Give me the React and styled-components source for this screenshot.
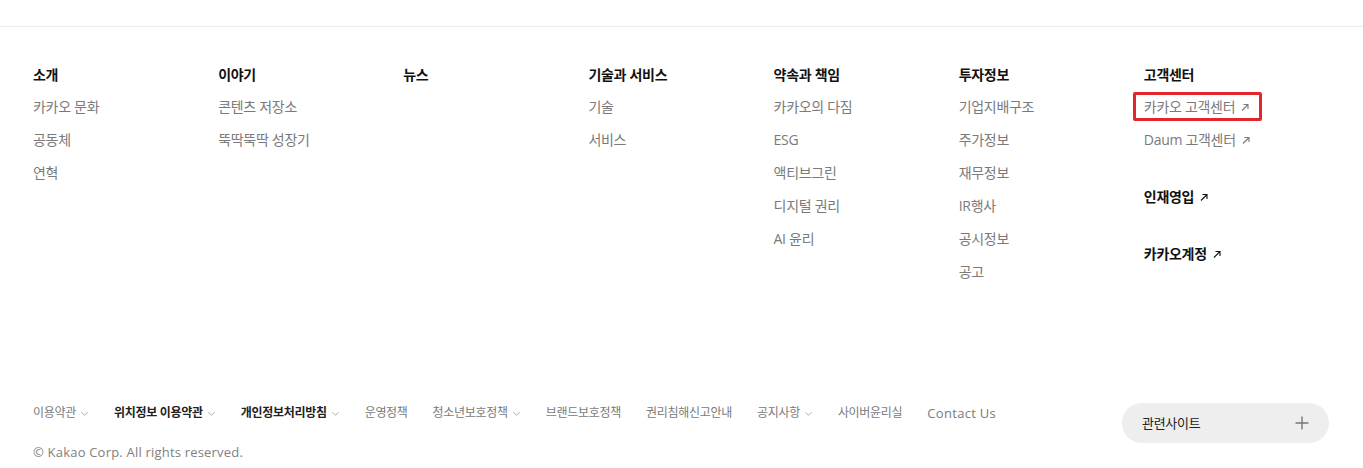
import styled, { createGlobalStyle } from 'styled-components';

const GlobalStyle = createGlobalStyle`
  * { box-sizing: border-box; }
  body {
    margin: 0;
    background: #fff;
    font-family: "Open Sans", "Noto Sans CJK KR", sans-serif;
    color: #222;
  }
  a { text-decoration: none; color: inherit; }
  ul { list-style: none; margin: 0; padding: 0; }
`;

const columns = [
  { title: '소개', items: ['카카오 문화', '공동체', '연혁'] },
  { title: '이야기', items: ['콘텐츠 저장소', '뚝딱뚝딱 성장기'] },
  { title: '뉴스', items: [] },
  { title: '기술과 서비스', items: ['기술', '서비스'] },
  { title: '약속과 책임', items: ['카카오의 다짐', 'ESG', '액티브그린', '디지털 권리', 'AI 윤리'] },
  { title: '투자정보', items: ['기업지배구조', '주가정보', '재무정보', 'IR행사', '공시정보', '공고'] },
];

const policies = [
  { label: '이용약관', more: true },
  { label: '위치정보 이용약관', more: true, strong: true },
  { label: '개인정보처리방침', more: true, strong: true },
  { label: '운영정책' },
  { label: '청소년보호정책', more: true },
  { label: '브랜드보호정책' },
  { label: '권리침해신고안내' },
  { label: '공지사항', more: true },
  { label: '사이버윤리실' },
  { label: 'Contact Us', latin: true },
];

function Arrow() {
  return (
    <ArrowIcon viewBox="0 0 10 10" width="10" height="10">
      <path d="M2 8.5L8 2.5M3.5 2.5H8V7" fill="none" stroke="currentColor" strokeWidth="1.1" />
    </ArrowIcon>
  );
}

function Chevron() {
  return (
    <ChevronIcon viewBox="0 0 10 10" width="9" height="9">
      <path d="M1.5 3.5L5 7L8.5 3.5" fill="none" stroke="currentColor" strokeWidth="0.9" />
    </ChevronIcon>
  );
}

export default function App() {
  return (
    <>
      <GlobalStyle />
      <Footer>
        <Inner>
          <Columns>
            {columns.map((col) => (
              <Column key={col.title}>
                <Title>{col.title}</Title>
                <List>
                  {col.items.map((item) => (
                    <li key={item}>
                      <Item href="#">{item}</Item>
                    </li>
                  ))}
                </List>
              </Column>
            ))}
            <Column>
              <Title>고객센터</Title>
              <List>
                <li>
                  <Item href="#" $marked>
                    카카오 고객센터 <Arrow />
                  </Item>
                </li>
                <li>
                  <Item href="#">
                    Daum 고객센터 <Arrow />
                  </Item>
                </li>
              </List>
              <Group>
                <Title as="a" href="#">
                  인재영입 <Arrow />
                </Title>
              </Group>
              <Group>
                <Title as="a" href="#">
                  카카오계정 <Arrow />
                </Title>
              </Group>
            </Column>
          </Columns>

          <Bottom>
            <div>
              <Policies>
                {policies.map((p) => (
                  <Policy key={p.label} $strong={p.strong} $latin={p.latin}>
                    {p.label}
                    {p.more && <Chevron />}
                  </Policy>
                ))}
              </Policies>
              <Copyright>© Kakao Corp. All rights reserved.</Copyright>
            </div>
            <Related type="button">
              관련사이트
              <PlusIcon viewBox="0 0 16 16" width="16" height="16">
                <path d="M8 1.5V14.5M1.5 8H14.5" stroke="currentColor" strokeWidth="1.4" />
              </PlusIcon>
            </Related>
          </Bottom>
        </Inner>
      </Footer>
    </>
  );
}

const Footer = styled.footer`
  margin-top: 26px;
  border-top: 1px solid #ececec;
  height: 442px;
`;

const Inner = styled.div`
  width: 1296px;
  margin-left: 33px;
  padding-top: 38px;
`;

const Columns = styled.div`
  display: grid;
  grid-template-columns: repeat(7, 1fr);
  height: 217px;
`;

const Column = styled.div`
  display: flex;
  flex-direction: column;
  align-items: flex-start;
`;

const Title = styled.strong`
  display: flex;
  align-items: center;
  gap: 4px;
  font-size: 14px;
  line-height: 20px;
  font-weight: 700;
  letter-spacing: -0.3px;
  color: #111;
`;

const List = styled.ul`
  margin-top: 12px;
  display: flex;
  flex-direction: column;
  align-items: flex-start;
  gap: 13px;

  & > li {
    display: flex;
    line-height: 20px;
  }
`;

const Item = styled.a`
  position: relative;
  display: flex;
  align-items: center;
  gap: 4px;
  font-size: 14px;
  line-height: 20px;
  letter-spacing: -0.3px;
  color: #7a7a7a;

  ${({ $marked }) =>
    $marked &&
    `
    &::after {
      content: '';
      position: absolute;
      top: -5px;
      bottom: -4px;
      left: -11px;
      right: -12px;
      border: 3px solid #e3252c;
      border-radius: 2px;
    }
  `}
`;

const Group = styled.div`
  margin-top: 37px;
`;

const ArrowIcon = styled.svg`
  flex: none;
  margin-left: 1px;
`;

const Bottom = styled.div`
  display: flex;
  justify-content: space-between;
  align-items: flex-start;
  margin-top: 121px;
`;

const Policies = styled.ul`
  display: flex;
  gap: 25px;
`;

const Policy = styled.li`
  display: flex;
  align-items: center;
  gap: 4px;
  font-size: ${({ $latin }) => ($latin ? '13px' : '12px')};
  line-height: 20px;
  letter-spacing: ${({ $latin }) => ($latin ? '0.3px' : '-0.3px')};
  color: ${({ $strong }) => ($strong ? '#222' : '#7a7a7a')};
  font-weight: ${({ $strong }) => ($strong ? 700 : 400)};
`;

const ChevronIcon = styled.svg`
  color: #999;
`;

const Copyright = styled.p`
  margin: 19px 0 0;
  font-size: 13px;
  line-height: 20px;
  letter-spacing: 0.2px;
  color: #808080;
`;

const Related = styled.button`
  width: 207px;
  height: 40px;
  border: none;
  border-radius: 20px;
  background: #eeeeee;
  padding: 0 19px 0 20px;
  display: flex;
  align-items: center;
  justify-content: space-between;
  font-family: inherit;
  font-size: 13px;
  font-weight: 400;
  line-height: 1;
  letter-spacing: -0.3px;
  color: #222;
  cursor: pointer;
`;

const PlusIcon = styled.svg`
  color: #777;
`;
